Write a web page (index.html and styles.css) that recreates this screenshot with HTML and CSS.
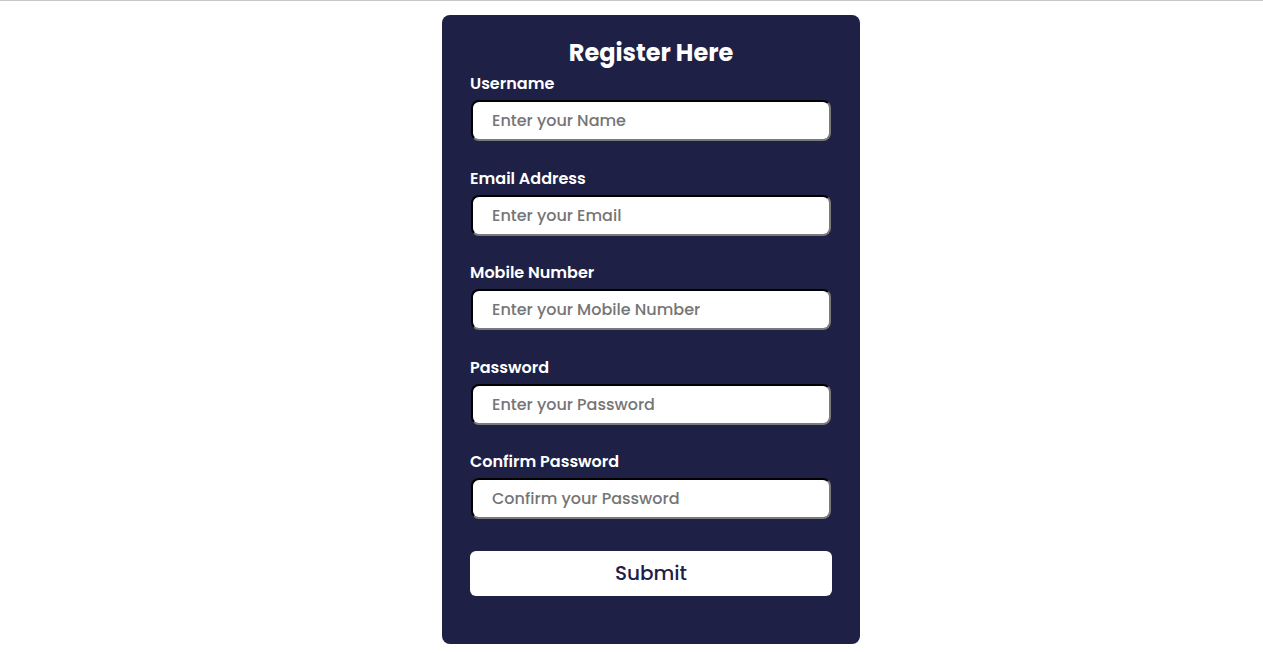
FILE: index.html
```html
<!DOCTYPE html>
<html lang="en">
<head>
<meta charset="utf-8">
<title>Register</title>
<link rel="stylesheet" href="styles.css">
</head>
<body>
<div class="page">
  <form class="card">
    <h2 class="title">Register Here</h2>
    <div class="field">
      <label class="label">Username</label>
      <input class="input" type="text" placeholder="Enter your Name">
    </div>
    <div class="field">
      <label class="label">Email Address</label>
      <input class="input" type="text" placeholder="Enter your Email">
    </div>
    <div class="field">
      <label class="label">Mobile Number</label>
      <input class="input" type="text" placeholder="Enter your Mobile Number">
    </div>
    <div class="field">
      <label class="label">Password</label>
      <input class="input" type="password" placeholder="Enter your Password">
    </div>
    <div class="field">
      <label class="label">Confirm Password</label>
      <input class="input" type="password" placeholder="Confirm your Password">
    </div>
    <button class="submit" type="button">Submit</button>
  </form>
</div>
</body>
</html>
```
FILE: styles.css
```css
html, body {
  margin: 0;
  padding: 0;
  background: #ffffff;
}
body {
  border-top: 1px solid #c6c6c6;
  font-family: "Poppins", Inter, "Open Sans", sans-serif;
}
.page {
  display: flex;
  justify-content: center;
  padding: 14px 0 0 39px;
}
.card {
  width: 418px;
  box-sizing: border-box;
  background: #1e2045;
  border-radius: 8px;
  padding: 22px 28px 48px;
  display: flex;
  flex-direction: column;
}
.title {
  margin: 0 0 3px;
  color: #ffffff;
  font-size: 24px;
  line-height: 32px;
  font-weight: 700;
  text-align: center;
}
.field {
  display: flex;
  flex-direction: column;
  margin-bottom: 25.5px;
}
.label {
  color: #ffffff;
  font-size: 16px;
  line-height: 24px;
  font-weight: 600;
  margin-bottom: 4px;
}
.input {
  margin: 0 1px;
  height: 41px;
  box-sizing: border-box;
  border: 2px inset #767676;
  border-color: #1a1a1a #7a7a7a #7a7a7a #1a1a1a;
  border-radius: 8px;
  padding: 0 19px;
  font-family: inherit;
  font-size: 16px;
  font-weight: 500;
  color: #333;
  background: #ffffff;
  outline: none;
}
.input::placeholder {
  color: #757575;
}
.submit {
  margin-top: 6.5px;
  height: 45px;
  padding: 0 0 2px;
  border: none;
  border-radius: 6px;
  background: #ffffff;
  color: #1e2045;
  font-family: inherit;
  font-size: 20px;
  font-weight: 500;
  cursor: pointer;
}
```
